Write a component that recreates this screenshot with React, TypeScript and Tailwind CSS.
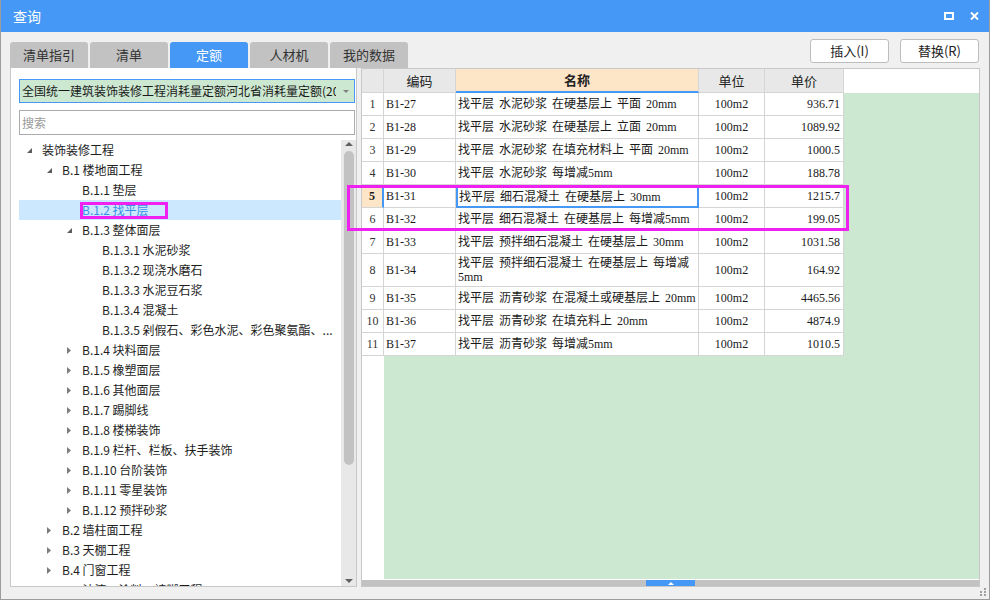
import React from 'react'

type TreeNode = { level: number; label: string; state?: 'open' | 'closed'; selected?: boolean }

const tree: TreeNode[] = [
  { level: 0, label: '装饰装修工程', state: 'open' },
  { level: 1, label: 'B.1 楼地面工程', state: 'open' },
  { level: 2, label: 'B.1.1 垫层' },
  { level: 2, label: 'B.1.2 找平层', selected: true },
  { level: 2, label: 'B.1.3 整体面层', state: 'open' },
  { level: 3, label: 'B.1.3.1 水泥砂浆' },
  { level: 3, label: 'B.1.3.2 现浇水磨石' },
  { level: 3, label: 'B.1.3.3 水泥豆石浆' },
  { level: 3, label: 'B.1.3.4 混凝土' },
  { level: 3, label: 'B.1.3.5 剁假石、彩色水泥、彩色聚氨酯、...' },
  { level: 2, label: 'B.1.4 块料面层', state: 'closed' },
  { level: 2, label: 'B.1.5 橡塑面层', state: 'closed' },
  { level: 2, label: 'B.1.6 其他面层', state: 'closed' },
  { level: 2, label: 'B.1.7 踢脚线', state: 'closed' },
  { level: 2, label: 'B.1.8 楼梯装饰', state: 'closed' },
  { level: 2, label: 'B.1.9 栏杆、栏板、扶手装饰', state: 'closed' },
  { level: 2, label: 'B.1.10 台阶装饰', state: 'closed' },
  { level: 2, label: 'B.1.11 零星装饰', state: 'closed' },
  { level: 2, label: 'B.1.12 预拌砂浆', state: 'closed' },
  { level: 1, label: 'B.2 墙柱面工程', state: 'closed' },
  { level: 1, label: 'B.3 天棚工程', state: 'closed' },
  { level: 1, label: 'B.4 门窗工程', state: 'closed' },
  { level: 1, label: 'B.5 油漆、涂料、裱糊工程', state: 'closed' },
]

const indent = ['pl-[8px]', 'pl-[28px]', 'pl-[48px]', 'pl-[68px]']

interface Row {
  no: number
  code: string
  name: string
  name2?: string
  price: string
}

const rows: Row[] = [
  { no: 1, code: 'B1-27', name: '找平层 水泥砂浆 在硬基层上 平面 20mm', price: '936.71' },
  { no: 2, code: 'B1-28', name: '找平层 水泥砂浆 在硬基层上 立面 20mm', price: '1089.92' },
  { no: 3, code: 'B1-29', name: '找平层 水泥砂浆 在填充材料上 平面 20mm', price: '1000.5' },
  { no: 4, code: 'B1-30', name: '找平层 水泥砂浆 每增减5mm', price: '188.78' },
  { no: 5, code: 'B1-31', name: '找平层 细石混凝土 在硬基层上 30mm', price: '1215.7' },
  { no: 6, code: 'B1-32', name: '找平层 细石混凝土 在硬基层上 每增减5mm', price: '199.05' },
  { no: 7, code: 'B1-33', name: '找平层 预拌细石混凝土 在硬基层上 30mm', price: '1031.58' },
  { no: 8, code: 'B1-34', name: '找平层 预拌细石混凝土 在硬基层上 每增减', name2: '5mm', price: '164.92' },
  { no: 9, code: 'B1-35', name: '找平层 沥青砂浆 在混凝土或硬基层上 20mm', price: '4465.56' },
  { no: 10, code: 'B1-36', name: '找平层 沥青砂浆 在填充料上 20mm', price: '4874.9' },
  { no: 11, code: 'B1-37', name: '找平层 沥青砂浆 每增减5mm', price: '1010.5' },
]

const tabs = ['清单指引', '清单', '定额', '人材机', '我的数据']

const cell = 'shrink-0 border-r border-b border-[#d5d5d5] flex items-center overflow-hidden whitespace-nowrap'

function Triangle({ state }: { state?: 'open' | 'closed' }) {
  if (state === 'open')
    return (
      <svg width="5" height="5" viewBox="0 0 5 5" className="mt-[1px]">
        <polygon points="5,0 5,5 0,5" fill="#5c5c5c" />
      </svg>
    )
  if (state === 'closed')
    return (
      <svg width="4" height="7" viewBox="0 0 4 7">
        <polygon points="0,0 4,3.5 0,7" fill="#7c7c7c" />
      </svg>
    )
  return null
}

function LeftPanel() {
  return (
    <div className="w-[347px] shrink-0 bg-white border-x border-b border-[#c8c8c8] flex flex-col">
      {/* Library select */}
      <div className="ml-[8px] mt-[11px] w-[336px] h-[24px] shrink-0 border border-[#4598f5] bg-[#cde8d1] flex items-center pl-[2px] text-[12px] text-[#1a1a1a]">
        <span className="flex-1 overflow-hidden whitespace-nowrap">全国统一建筑装饰装修工程消耗量定额河北省消耗量定额(2012)</span>
        <span className="w-[18px] flex justify-center pl-[2px]">
          <svg width="6" height="3" viewBox="0 0 6 3">
            <polygon points="0,0 6,0 3,3" fill="#808080" />
          </svg>
        </span>
      </div>

      {/* Search */}
      <div className="ml-[8px] mt-[7px] w-[336px] h-[25px] shrink-0 border border-[#ababab] flex items-center pl-[2px] text-[12px] text-[#9a9a9a]">
        搜索
      </div>

      {/* Tree */}
      <div className="mt-[5px] flex-1 min-h-0 flex">
        <div className="ml-[8px] w-[322px] overflow-hidden">
          {tree.map((n) => (
            <div
              key={n.label}
              className={`flex items-center h-[20px] text-[12px] whitespace-nowrap ${indent[n.level]} ${
                n.selected ? 'bg-[#cce8ff] text-[#3a8ee6]' : 'text-[#1e1e1e]'
              }`}
            >
              <span className="w-[15px] shrink-0 flex items-center">
                <Triangle state={n.state} />
              </span>
              <span className="truncate">{n.label}</span>
            </div>
          ))}
        </div>
        {/* Scrollbar */}
        <div className="w-[15px] shrink-0 bg-[#e8e8e8] flex flex-col items-center">
          <div className="h-[10px] pt-[2px] flex items-start">
            <svg width="8" height="4" viewBox="0 0 8 4">
              <polygon points="4,0 8,4 0,4" fill="#606060" />
            </svg>
          </div>
          <div className="mt-[1px] w-[10px] h-[314px] rounded-full bg-[#c2c2c2]" />
          <div className="flex-1" />
          <div className="h-[10px] pt-[3px] flex items-start">
            <svg width="8" height="4" viewBox="0 0 8 4">
              <polygon points="0,0 8,0 4,4" fill="#606060" />
            </svg>
          </div>
        </div>
      </div>
    </div>
  )
}

function RightPanel() {
  return (
    <div className="flex-1 bg-white border border-[#c8c8c8] flex flex-col">
      <div className="flex-1 min-h-0 flex flex-col bg-[#cde8d1] overflow-hidden font-['Liberation_Serif','Noto_Sans_CJK_SC',serif] text-[12px] text-[#1a1a1a]">
        {/* Header */}
        <div className="flex h-[24px] shrink-0 font-['Noto_Sans_CJK_SC',sans-serif] text-[13px] text-[#222]">
          <div className={`${cell} w-[22px] bg-[#e8e8e8]`} />
          <div className={`${cell} w-[72px] bg-[#e8e8e8] justify-center`}>编码</div>
          <div className="shrink-0 w-[243px] border-r border-[#d5d5d5] border-b-2 border-b-[#4598f5] bg-[#fde5c8] flex items-center justify-center font-bold">
            名称
          </div>
          <div className={`${cell} w-[66px] bg-[#e8e8e8] justify-center`}>单位</div>
          <div className={`${cell} w-[79px] bg-[#e8e8e8] justify-center`}>单价</div>
          <div className="flex-1 bg-white" />
        </div>

        {/* Rows */}
        {rows.map((r) => {
          const sel = r.no === 5
          return (
            <div key={r.no} className={`flex shrink-0 ${r.name2 ? 'h-[33px]' : 'h-[23px]'}`}>
              <div
                className={`${cell} w-[22px] justify-center ${
                  sel ? 'bg-[#fde5c8] font-bold border-r-2 border-r-[#4598f5]' : 'bg-white text-[#333]'
                }`}
              >
                {r.no}
              </div>
              <div className={`${cell} w-[72px] bg-white pl-[2px]`}>{r.code}</div>
              {sel ? (
                <div className="shrink-0 w-[243px] bg-white border-2 border-[#4598f5] flex items-center pl-[1px] whitespace-nowrap overflow-hidden [word-spacing:2px]">
                  {r.name}
                </div>
              ) : (
                <div className={`${cell} w-[243px] bg-white pl-[2px] [word-spacing:2px]`}>
                  {r.name2 ? (
                    <div className="leading-[14px]">
                      {r.name}
                      <br />
                      {r.name2}
                    </div>
                  ) : (
                    r.name
                  )}
                </div>
              )}
              <div className={`${cell} w-[66px] bg-white justify-center`}>100m2</div>
              <div className={`${cell} w-[79px] bg-white justify-end pr-[3px]`}>{r.price}</div>
              <div className="flex-1" />
            </div>
          )
        })}

        <div className="flex-1 flex">
          <div className="w-[22px] bg-white" />
        </div>
      </div>

      {/* Horizontal scrollbar */}
      <div className="h-[1px] shrink-0 bg-white" />
      <div className="h-[6px] shrink-0 bg-[#c2c2c2] flex">
        <div className="ml-[284px] w-[49px] bg-[#4598f5] flex items-center justify-center">
          <svg width="6" height="3" viewBox="0 0 6 3">
            <polygon points="3,0 6,3 0,3" fill="#ffffff" />
          </svg>
        </div>
      </div>
    </div>
  )
}

export default function App() {
  return (
    <div className="relative w-[990px] h-[600px] flex flex-col border-x border-b border-[#9c9c9c] bg-[#f0f0f0] font-['Noto_Sans_CJK_SC',sans-serif] text-[#222] overflow-hidden">
      {/* Title bar */}
      <div className="h-[32px] shrink-0 bg-[#4598f5] flex items-center pl-[12px] pr-[10px] text-white">
        <span className="text-[14px] leading-none">查询</span>
        <div className="ml-auto flex items-center gap-[16px]">
          <svg width="10" height="8" viewBox="0 0 10 8">
            <rect x="1" y="1" width="8" height="6" fill="none" stroke="#ffffff" strokeWidth="2" />
          </svg>
          <svg width="9" height="8" viewBox="0 0 9 8">
            <path d="M1 0.5 L8 7.5 M8 0.5 L1 7.5" stroke="#ffffff" strokeWidth="2" />
          </svg>
        </div>
      </div>

      {/* Tabs + actions */}
      <div className="flex h-[36px] shrink-0 px-[9px]">
        <div className="flex items-end gap-[2px]">
          {tabs.map((t) => (
            <div
              key={t}
              className={`w-[78px] h-[26px] rounded-t-[3px] flex items-center justify-center text-[13px] ${
                t === '定额' ? 'bg-[#4598f5] text-white' : 'bg-[#c2c2c2] text-[#333]'
              }`}
            >
              {t}
            </div>
          ))}
        </div>
        <div className="ml-auto mr-[1px] pt-[7px] flex gap-[11px]">
          <button className="w-[79px] h-[24px] bg-white border border-[#bdbdbd] rounded-[3px] text-[13px] text-[#222]">
            插入(I)
          </button>
          <button className="w-[79px] h-[24px] bg-white border border-[#bdbdbd] rounded-[3px] text-[13px] text-[#222]">
            替换(R)
          </button>
        </div>
      </div>

      {/* Main */}
      <div className="flex h-[519px] shrink-0 px-[9px] gap-[4px]">
        <LeftPanel />
        <RightPanel />
      </div>

      <div className="flex-1" />

      {/* Resize grip */}
      <svg className="absolute right-[3px] bottom-[3px]" width="9" height="9" viewBox="0 0 9 9">
        <rect x="7" y="1" width="2" height="2" fill="#a0a0a0" />
        <rect x="3" y="4" width="2" height="2" fill="#a0a0a0" />
        <rect x="7" y="4" width="2" height="2" fill="#a0a0a0" />
        <rect x="3" y="7" width="2" height="2" fill="#a0a0a0" />
        <rect x="7" y="7" width="2" height="2" fill="#a0a0a0" />
      </svg>

      {/* Annotation boxes */}
      <div className="absolute left-[79px] top-[202px] w-[88px] h-[17px] border-[3px] border-[#f020f0]" />
      <div className="absolute left-[346px] top-[185px] w-[502px] h-[46px] border-[3px] border-[#f020f0]" />
    </div>
  )
}
